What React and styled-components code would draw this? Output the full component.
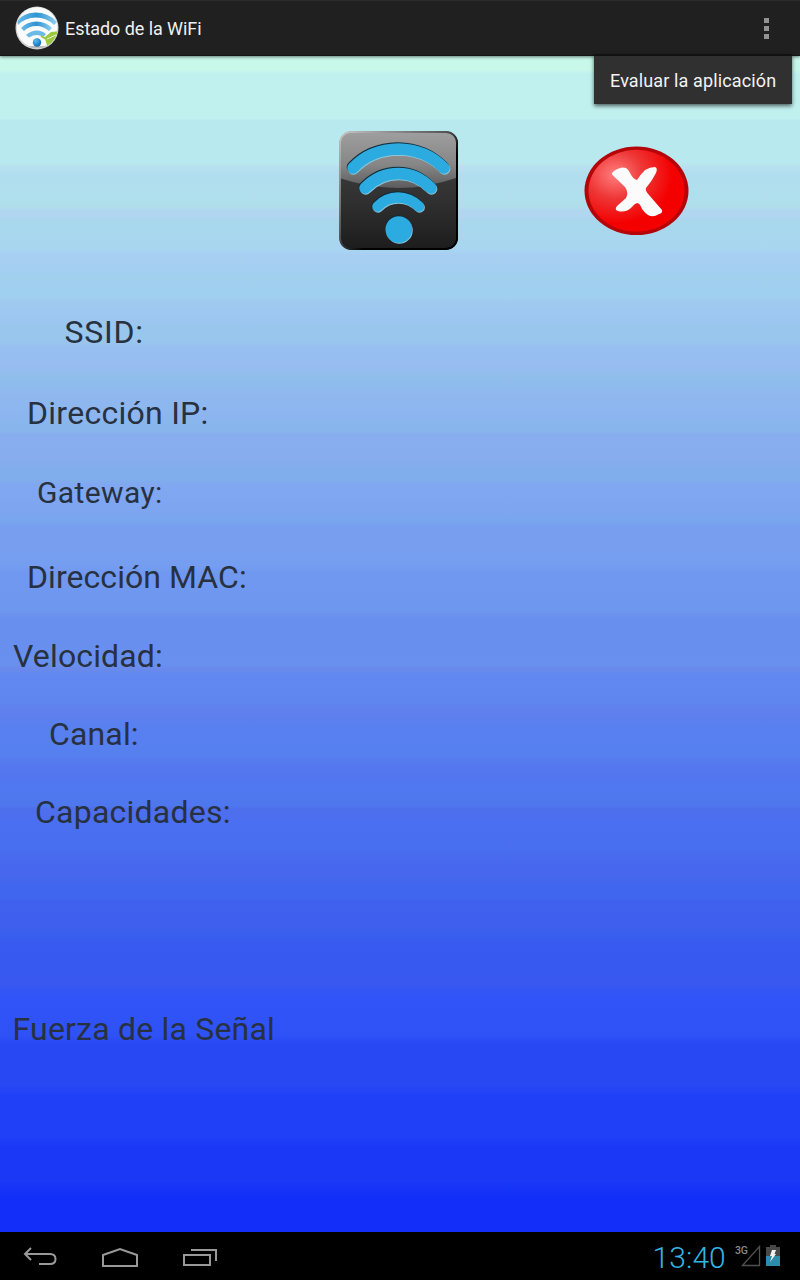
import styled, { createGlobalStyle } from 'styled-components';

const GlobalStyle = createGlobalStyle`
  * {
    box-sizing: border-box;
  }

  body {
    margin: 0;
    background: #000;
    font-family: Roboto, sans-serif;
  }
`;

const Screen = styled.div`
  display: flex;
  flex-direction: column;
  width: 800px;
  height: 1280px;
  overflow: hidden;
`;

const ActionBar = styled.header`
  position: relative;
  display: flex;
  align-items: center;
  flex: none;
  height: 56px;
  padding: 0 31px 0 15px;
  background: #202020;
  border-top: 1px solid #2b2b2b;
  border-bottom: 1px solid #151515;
  box-shadow: 0 1px 3px rgba(0, 0, 0, 0.5);
`;

const Title = styled.h1`
  flex: 1;
  margin: 0 0 0 6px;
  color: #f0f0f0;
  font-size: 18px;
  font-weight: 400;
  letter-spacing: -0.06px;
`;

const Overflow = styled.button`
  display: flex;
  flex-direction: column;
  gap: 3px;
  padding: 0;
  border: none;
  background: none;
`;

const Dot = styled.span`
  width: 5px;
  height: 5px;
  background: #929292;
`;

const Menu = styled.div`
  position: absolute;
  top: 53px;
  right: 8px;
  width: 198px;
  height: 50px;
  border-top: 2px solid #111;
  background: #303030;
  box-shadow: 0 2px 4px rgba(0, 0, 0, 0.6);
`;

const MenuItem = styled.div`
  padding-left: 16px;
  color: #f3f3f3;
  font-size: 18px;
  letter-spacing: 0.13px;
  line-height: 49px;
  white-space: nowrap;
`;

/* Degradado con bandas visibles, de verde agua a azul */
const Content = styled.main`
  flex: 1;
  background: linear-gradient(
    #c8f8ea 0px, #c8f8ea 14px, #c0f1ef 18px, #c0f1ef 63px, #b8e9ef 64px,
    #b8e9ee 107px, #b8e0f0 111px, #b0deee 119px, #b0dfec 150px, #b0d6f0 155px,
    #b0d6f0 161px, #a8d8ec 165px, #a8d6f0 192px, #a8cff3 199px, #a4cff2 215px,
    #a0d0ee 220px, #a0d0ef 240px, #a0c9f0 248px, #9cc6ef 265px, #98c6ec 274px,
    #98c6ee 286px, #98bff1 291px, #97bdf1 310px, #90beec 320px, #8ebbed 331px,
    #90b8ef 339px, #8cb5ef 361px, #88b6ec 370px, #88b6ec 376px, #88aeef 377px,
    #88adef 404px, #80adec 413px, #80adec 424px, #80a7f0 429px, #7ea5f0 452px,
    #78a5ef 467px, #789fef 470px, #769ef0 508px, #7098f0 517px, #6e97ef 555px,
    #688eee 564px, #6890ef 609px, #6a8aea 613px, #6088f0 618px, #5f86ef 645px,
    #607fee 657px, #5880ef 670px, #567ff0 700px, #5577ee 710px, #5376f0 722px,
    #5078f0 730px, #4e77ee 750px, #4f6eec 753px, #4a6ff0 767px, #486fef 792px,
    #486aee 799px, #4667ee 820px, #4065ee 832px, #4065ee 843px, #4060ee 845px,
    #3f5fee 871px, #385fee 879px, #385af0 888px, #3858f0 928px, #3054f8 939px,
    #2f52f6 979px, #2848f4 988px, #2848f4 1029px, #2040f8 1041px,
    #2040f8 1080px, #1a38f6 1091px, #1a38f6 1125px, #122ef8 1142px,
    #122ef8 1176px
  );
`;

const StatusIcons = styled.div`
  display: flex;
  align-items: center;
  gap: 125px;
  height: 120px;
  margin: 74px 0 0 338px;
`;

const Fields = styled.dl`
  display: flex;
  flex-direction: column;
  margin: 62px 0 0;
`;

const Field = styled.dt`
  height: 40px;
  margin-top: ${props => props.$gap}px;
  padding-left: ${props => props.$indent}px;
  color: #27313f;
  font-size: ${props => props.$size || 32}px;
  letter-spacing: ${props => props.$spacing}px;
  line-height: 40px;
  white-space: nowrap;
`;

const NavBar = styled.footer`
  display: flex;
  align-items: center;
  flex: none;
  height: 48px;
  padding: 0 20px 0 22px;
  background: #000;
`;

const NavButtons = styled.div`
  display: flex;
  align-items: center;
  gap: 43px;
  flex: 1;
  padding-top: 2px;
`;

const Tray = styled.div`
  display: flex;
  align-items: center;
  height: 48px;
`;

const Clock = styled.time`
  margin-right: 9px;
  color: #33b5e5;
  font-size: 30px;
  font-weight: 300;
  letter-spacing: 0.1px;
  line-height: 50px;
  padding-top: 3px;
`;

const Network = styled.span`
  align-self: flex-start;
  margin: 12px -7px 0 0;
  color: #8b8b8b;
  font-size: 10.5px;
  font-weight: 500;
  line-height: 13px;
`;

const AppIcon = () => (
  <svg width="44" height="46" viewBox="0 0 44 46">
    <defs>
      <linearGradient id="arc" x1="0" y1="0" x2="1" y2="0">
        <stop offset="0" stopColor="#69bce8" />
        <stop offset="0.5" stopColor="#2e94d2" />
        <stop offset="1" stopColor="#8fd0f0" />
      </linearGradient>
      <radialGradient id="ball" cx="0.35" cy="0.3" r="0.8">
        <stop offset="0" stopColor="#55baf0" />
        <stop offset="1" stopColor="#0966b0" />
      </radialGradient>
      <clipPath id="disc"><circle cx="22" cy="23" r="20.5" /></clipPath>
    </defs>
    <circle cx="22" cy="23" r="21.5" fill="#d0d2d3" />
    <circle cx="22" cy="22.5" r="20.3" fill="#fbfbfb" />
    <g clipPath="url(#disc)">
      <path d="M2 16 Q8 8 20 7.500 Q34 7.500 42 17 L39 20 Q32 12.500 21 12.500 Q10 12.500 3 20 Z" fill="url(#arc)" />
      <path d="M6 23 Q12 16.500 21.500 16.500 Q31 16.500 37 23 L34 26 Q28 21 21.500 21 Q14 21 9 26 Z" fill="url(#arc)" />
      <path d="M11 30 Q16 25.500 22 25.500 Q27 25.500 31 29 L28 32 Q22 28 14 32.500 Z" fill="#6abbe6" />
      <path d="M30 32 L36 27 L44 26 L44 40 L36 43 Q33 39 32 35 Z" fill="#9bc83e" />
      <path d="M26 31 L31 34 L34 43 M31 34 L42 29" fill="none" stroke="#9bc83e" strokeWidth="2" />
      <path d="M32 34 L42 29.500" fill="none" stroke="#e9f3d0" strokeWidth="1" />
      <ellipse cx="22" cy="42" rx="9" ry="1.300" fill="#bbb" />
    </g>
    <circle cx="22" cy="37.500" r="4.200" fill="url(#ball)" />
  </svg>
);

const WifiIcon = () => (
  <svg width="121" height="120" viewBox="0 0 121 120">
    <defs>
      <linearGradient id="tile" x1="0" y1="0" x2="0" y2="1">
        <stop offset="0" stopColor="#444" />
        <stop offset="0.6" stopColor="#303030" />
        <stop offset="1" stopColor="#1d1d1d" />
      </linearGradient>
      <linearGradient id="gloss" x1="0" y1="0" x2="0" y2="1">
        <stop offset="0" stopColor="#a0a0a0" />
        <stop offset="0.6" stopColor="#868686" />
        <stop offset="1" stopColor="#5c5c5e" />
      </linearGradient>
      <linearGradient id="edge" x1="0" y1="0" x2="1" y2="1">
        <stop offset="0" stopColor="#c6c6c6" />
        <stop offset="0.45" stopColor="#555" />
        <stop offset="0.6" stopColor="#000" />
      </linearGradient>
      <clipPath id="tileClip"><rect x="2" y="2" width="117" height="116" rx="11" /></clipPath>
    </defs>
    <rect x="1.500" y="1.500" width="118.500" height="118" rx="12" fill="#000" />
    <g clipPath="url(#tileClip)">
      <rect x="1" y="1" width="117" height="117" fill="url(#tile)" />
      <path d="M1 0 H118 V48 Q60 68 1 48 Z" fill="url(#gloss)" />
    </g>
    <rect x="2" y="2" width="117" height="117" rx="11" fill="none" stroke="url(#edge)" strokeWidth="1.800" />
    {['#8cc4d8', '#0e2c3b', '#2cabe1'].map((color, i) => (
      <g
        key={color}
        transform={['translate(0.6 0.9)', 'translate(-0.6 -1)', ''][i]}
        fill="none"
        stroke={color}
        strokeLinecap="round"
      >
        <path d="M15 38 Q32 19.500 60.500 19 Q88 19.500 106 38" strokeWidth="11.500" />
        <path d="M27 58 Q41 43.500 60.500 43.500 Q79 43.500 93 58" strokeWidth="11.500" />
        <path d="M39.500 76.500 Q48 67.500 60 67.500 Q72 67.500 81 76.500" strokeWidth="10.500" />
        <circle cx="60.800" cy="99.500" r="13.300" fill={color} stroke="none" />
      </g>
    ))}
  </svg>
);

const ErrorIcon = () => (
  <svg width="106" height="90" viewBox="0 0 106 90">
    <defs>
      <radialGradient id="red" cx="0.28" cy="0.3" r="0.6">
        <stop offset="0" stopColor="#ff7f7f" />
        <stop offset="0.5" stopColor="#ee3535" />
        <stop offset="1" stopColor="#f40000" />
      </radialGradient>
    </defs>
    <ellipse cx="52.500" cy="45.800" rx="52" ry="44.200" fill="#b50508" />
    <ellipse cx="52.500" cy="45.800" rx="48" ry="41" fill="url(#red)" />
    <path
      d="M28.500 30 Q27 28 30 26 Q37 21 42 23 Q44 24 46 28 Q49 34 53 35 Q57 29 61 25 Q66 22 71 22 Q74 23 72 28 Q68 36 62 43 Q61 46 65 50 L78 65 Q79 68 75 69 Q69 73 64 70 Q61 68 58 64 Q56 58 53 58 Q50 59 48 62 Q42 68 34 66 Q30 65 33 61 L42 53 Q45 48 41 42 Z"
      fill="#fbfbfb"
    />
  </svg>
);

const BackIcon = () => (
  <svg width="36" height="20" viewBox="0 0 36 20" fill="none" stroke="#999" strokeWidth="2">
    <path d="M9 1 L3 7 L9 13 M3.500 7 H28 Q33.500 7 33.500 12 Q33.500 17 28 17 H17" />
  </svg>
);

const HomeIcon = () => (
  <svg width="37" height="22" viewBox="0 0 37 22" fill="none" stroke="#999" strokeWidth="2">
    <path d="M2 9 L19 3 L36 9 V20 H2 Z" />
  </svg>
);

const RecentIcon = () => (
  <svg width="37" height="20" viewBox="0 0 37 20" fill="none" stroke="#999" strokeWidth="2">
    <path d="M3 8 H29 V18 H3 Z M10 3 H35 V14" />
  </svg>
);

const SignalIcon = () => (
  <svg width="20" height="22" viewBox="0 0 20 22">
    <path d="M1.500 20.500 L18.500 1.500 V20.500 Z" fill="none" stroke="#4f4f4f" strokeWidth="1.300" />
  </svg>
);

const Battery = styled.svg`
  margin-left: 5px;
`;

const BatteryIcon = () => (
  <Battery width="14" height="22" viewBox="0 0 14 22">
    <path d="M4 0 H10 V2 H14 V11 H0 V2 H4 Z" fill="#484848" />
    <rect y="11" width="14" height="10" fill="#2c8cab" />
    <path d="M6 5 H10 L8.500 9 H10 L4 17 L6 11 H4 Z" fill="#f2f2f2" />
  </Battery>
);

const fields = [
  { label: 'SSID:', indent: 64.5, gap: 0, spacing: 0.75 },
  { label: 'Dirección IP:', indent: 27, gap: 41, spacing: 0.27 },
  { label: 'Gateway:', indent: 37, gap: 40, size: 30, spacing: 0.4 },
  { label: 'Dirección MAC:', indent: 27, gap: 44, spacing: 0.06 },
  { label: 'Velocidad:', indent: 13, gap: 39, spacing: 0.15 },
  { label: 'Canal:', indent: 49, gap: 38, spacing: 0.15 },
  { label: 'Capacidades:', indent: 35, gap: 38, spacing: 0.23 },
  { label: 'Fuerza de la Señal', indent: 12.5, gap: 177, spacing: 0.2 },
];

const App = () => (
  <>
    <GlobalStyle />
    <Screen>
      <ActionBar>
        <AppIcon />
        <Title>Estado de la WiFi</Title>
        <Overflow aria-label="Más opciones">
          <Dot />
          <Dot />
          <Dot />
        </Overflow>
        <Menu>
          <MenuItem>Evaluar la aplicación</MenuItem>
        </Menu>
      </ActionBar>
      <Content>
        <StatusIcons>
          <WifiIcon />
          <ErrorIcon />
        </StatusIcons>
        <Fields>
          {fields.map(field => (
            <Field
              key={field.label}
              $indent={field.indent}
              $gap={field.gap}
              $size={field.size}
              $spacing={field.spacing}
            >
              {field.label}
            </Field>
          ))}
        </Fields>
      </Content>
      <NavBar>
        <NavButtons>
          <BackIcon />
          <HomeIcon />
          <RecentIcon />
        </NavButtons>
        <Tray>
          <Clock>13:40</Clock>
          <Network>3G</Network>
          <SignalIcon />
          <BatteryIcon />
        </Tray>
      </NavBar>
    </Screen>
  </>
);

export default App;
